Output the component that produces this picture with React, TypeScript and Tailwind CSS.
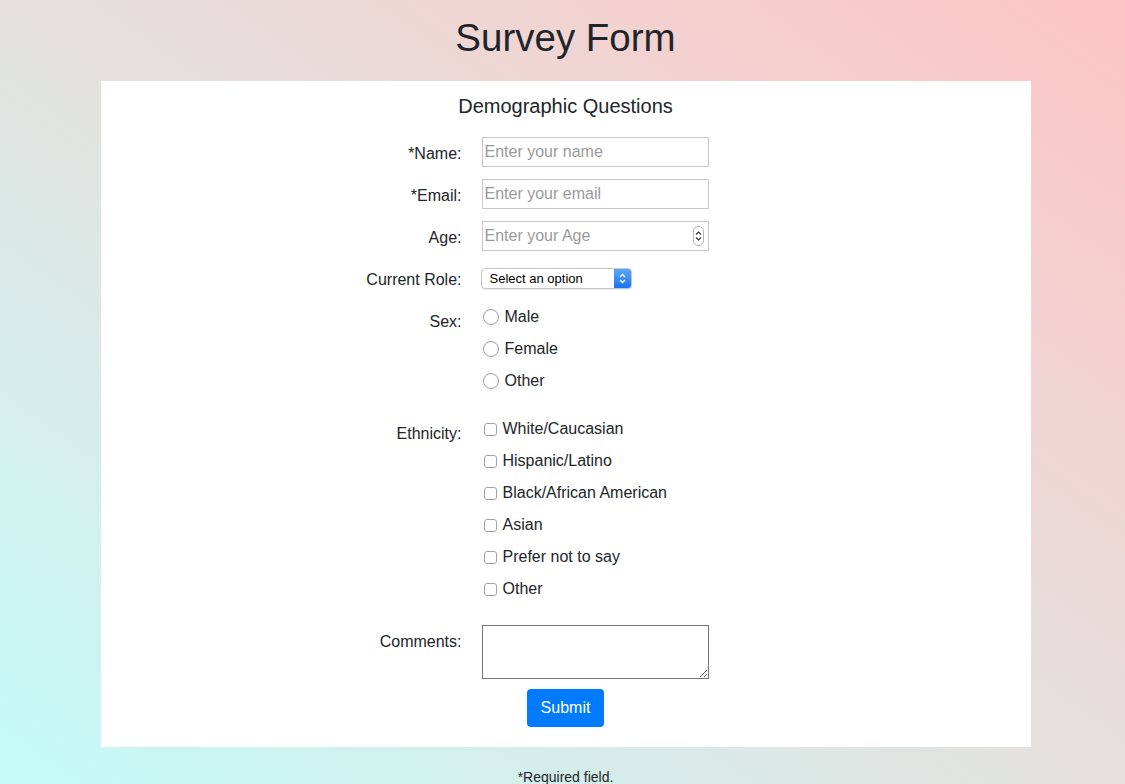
import React from 'react';

const font = { fontFamily: '"Liberation Sans", Arial, Helvetica, sans-serif' };

function Row({ label, children }: { label: string; children: React.ReactNode }) {
  return (
    <div className="flex flex-row items-start min-h-[30px]">
      <label className="w-[361px] shrink-0 text-right pt-[5px] leading-[24px] text-[16px] text-[#212529]">
        {label}
      </label>
      <div className="ml-[20px]">{children}</div>
    </div>
  );
}

function Radio({ text }: { text: string }) {
  return (
    <label className="flex flex-row items-center leading-[24px] text-[16px] text-[#212529]">
      <span className="ml-[1px] w-[16px] h-[16px] rounded-full border border-[#a3a3a3] bg-white shadow-[inset_0_1px_1px_rgba(0,0,0,0.06)]" />
      <span className="ml-[6px]">{text}</span>
    </label>
  );
}

function Check({ text }: { text: string }) {
  return (
    <label className="flex flex-row items-center leading-[24px] text-[16px] text-[#212529]">
      <span className="ml-[2px] w-[13px] h-[13px] rounded-[3px] border border-[#a3a3a3] bg-white" />
      <span className="ml-[6px]">{text}</span>
    </label>
  );
}

const inputCls =
  "w-[227px] h-[30px] border border-[#c8c8c8] bg-white px-[2px] text-[16px] text-[#212529] placeholder:text-[#9a9a9a] outline-none";

export default function App() {
  const ethnicities = [
    "White/Caucasian",
    "Hispanic/Latino",
    "Black/African American",
    "Asian",
    "Prefer not to say",
    "Other",
  ];

  return (
    <div
      className="min-h-screen bg-gradient-to-tr from-[#c1fcf9] to-[#fdc4c4] pl-[6px] pt-[14px] pb-[20px]"
      style={font}
    >
      <h1 className="text-center text-[38.5px] leading-[48px] font-medium text-[#212529]">Survey Form</h1>

      <form className="mx-auto mt-[19px] w-[930px] bg-white pt-[13px] pb-[20px]">
        <h5 className="text-center text-[20px] leading-[24px] text-[#212529]">Demographic Questions</h5>

        <div className="mt-[19px] flex flex-col gap-[12px]">
          <Row label="*Name:">
            <input type="text" placeholder="Enter your name" className={inputCls} />
          </Row>
          <Row label="*Email:">
            <input type="email" placeholder="Enter your email" className={inputCls} />
          </Row>
          <Row label="Age:">
            <div className="relative">
              <input type="text" placeholder="Enter your Age" className={inputCls} />
              <span className="absolute right-[5px] top-[5px] w-[11px] h-[20px] rounded-[5px] border border-[#b5b5b5] bg-white flex items-center justify-center">
                <svg width="7" height="14" viewBox="0 0 7 14" fill="none" stroke="#333" strokeWidth="1.1">
                  <path d="M1 5.5 L3.5 3 L6 5.5" />
                  <path d="M1 8.5 L3.5 11 L6 8.5" />
                </svg>
              </span>
            </div>
          </Row>
          <Row label="Current Role:">
            <div className="mt-[5px] -ml-[1px] flex flex-row w-[151px] h-[21px] rounded-[4px] border border-[#c6c6c6] bg-white overflow-hidden shadow-[0_1px_1px_rgba(0,0,0,0.08)]">
              <span className="flex-1 pl-[8px] text-[13px] leading-[19px] text-black">Select an option</span>
              <span className="w-[17px] h-full bg-gradient-to-b from-[#5ba4fb] to-[#1a73f0] flex items-center justify-center">
                <svg width="7" height="13" viewBox="0 0 7 13" fill="none" stroke="#fff" strokeWidth="1.3">
                  <path d="M1 5 L3.5 2.5 L6 5" />
                  <path d="M1 8 L3.5 10.5 L6 8" />
                </svg>
              </span>
            </div>
          </Row>
          <Row label="Sex:">
            <div className="flex flex-col gap-[8px]">
              <Radio text="Male" />
              <Radio text="Female" />
              <Radio text="Other" />
            </div>
          </Row>
          <div className="mt-[12px]">
            <Row label="Ethnicity:">
              <div className="flex flex-col gap-[8px]">
                {ethnicities.map((e) => (
                  <Check key={e} text={e} />
                ))}
              </div>
            </Row>
          </div>
          <div className="mt-[12px]">
            <Row label="Comments:">
              <textarea className="block w-[227px] h-[54px] border border-[#767676] bg-white" />
            </Row>
          </div>
        </div>

        <div className="mt-[10px] flex justify-center">
          <button
            type="submit"
            className="h-[38px] px-[14px] rounded-[4px] bg-[#007bff] text-white text-[16px] leading-[24px]"
          >
            Submit
          </button>
        </div>
      </form>

      <p className="mt-[20px] text-center text-[14px] leading-[20px] text-[#212529]">*Required field.</p>
    </div>
  );
}
